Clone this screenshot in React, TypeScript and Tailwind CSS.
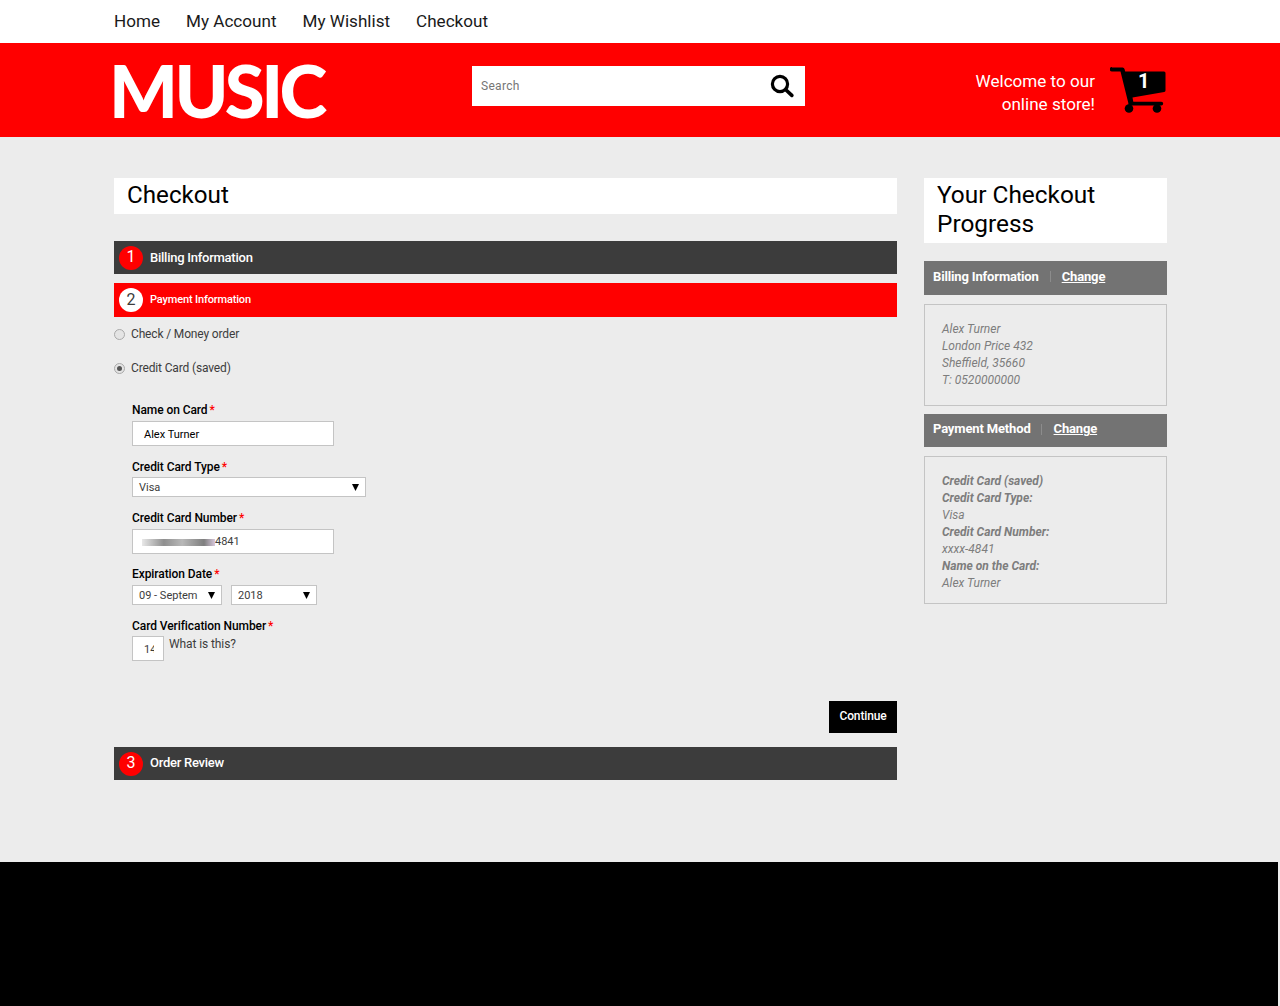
import { ReactNode } from 'react'

const navLinks = ['Home', 'My Account', 'My Wishlist', 'Checkout']

function CartIcon() {
  return (
    <svg width="58" height="48" viewBox="0 0 58 48" className="block">
      <path d="M2 1.5h10.5a2 2 0 0 1 2 1.6l.7 2.4H54a1.5 1.5 0 0 1 1.5 1.5v17.5a1.5 1.5 0 0 1-1.3 1.5L22.5 31.5l.8 4.2h28a1.9 1.9 0 0 1 0 3.8H18.6l-.4-3-7.7-31H2a2.2 2.2 0 0 1 0-4.5z" fill="#000" />
      <circle cx="19" cy="42.5" r="4.3" fill="#000" />
      <circle cx="47" cy="42.5" r="4.3" fill="#000" />
    </svg>
  )
}

function SearchIcon() {
  return (
    <svg width="24" height="24" viewBox="0 0 24 24" fill="none" stroke="#000" strokeWidth="3.2" strokeLinecap="round">
      <circle cx="10" cy="10" r="7.6" />
      <path d="M15.8 15.8l6 5.6" strokeWidth="3.6" />
    </svg>
  )
}

function StepBar({ num, label, active, lift }: { num: number; label: string; active?: boolean; lift?: boolean }) {
  return (
    <div className={active ? 'flex h-[34px] items-center bg-[#ff0000] pl-[5px]' : 'flex h-[33px] items-center bg-[#3c3c3c] pl-[5px]'}>
      <span
        className={
          active
            ? 'flex h-6 w-6 items-center justify-center rounded-full bg-white pb-px text-base text-[#3c3c3c]'
            : 'flex h-6 w-6 items-center justify-center rounded-full bg-[#ff0000] pb-[2px] text-base text-white'
        }
      >
        {num}
      </span>
      <span className={active ? 'ml-[7px] text-[11px] font-medium tracking-[-0.15px] text-white' : `ml-[7px] text-[13px] font-medium tracking-[-0.25px] text-white ${lift ? 'pb-[2px]' : ''}`}>{label}</span>
    </div>
  )
}

function Radio({ label, checked }: { label: string; checked?: boolean }) {
  return (
    <div className="flex h-[34px] items-center text-xs tracking-[-0.15px] text-[#3c3c3c]">
      <span className="flex h-[11px] w-[11px] items-center justify-center rounded-full border border-[#a9a9a9] bg-[#e4e4e4]">
        {checked && <span className="h-[5px] w-[5px] rounded-full bg-[#555555]" />}
      </span>
      <span className="ml-[6px]">{label}</span>
    </div>
  )
}

function FieldLabel({ children }: { children: ReactNode }) {
  return (
    <div className="text-xs leading-4 font-medium tracking-[-0.08px] text-black">
      {children}
      <span className="ml-[2px] text-[#ff0000]">*</span>
    </div>
  )
}

function FakeSelect({ value, width }: { value: string; width: string }) {
  return (
    <div className={`flex h-5 items-center justify-between border border-[#c4c4c4] bg-white pr-[6px] pl-[6px] text-[11px] text-[#3c3c3c] ${width}`}>
      <span className="pt-[2px]">{value}</span>
      <svg width="7" height="7" viewBox="0 0 7 7">
        <path d="M0 0h7L3.5 7z" fill="#000" />
      </svg>
    </div>
  )
}

function SideHeading({ title, gap, height }: { title: string; gap: string; height: string }) {
  return (
    <div className={`flex items-center bg-[#737373] pb-[3px] pl-[9px] text-[13px] font-bold tracking-[-0.15px] text-white ${height}`}>
      <span>{title}</span>
      <span className={`h-[11px] w-px bg-[#8c8c8c] ${gap}`} />
      <span className="underline">Change</span>
    </div>
  )
}

export default function App() {
  return (
    <div className="flex min-h-[1006px] flex-col bg-[#ececec] font-['Roboto',sans-serif]">
      <div className="h-[43px] bg-white">
        <nav className="ml-[114px] flex h-full items-center gap-[26px] text-[17.1px] text-[#1a1a1a]">
          {navLinks.map(link => (
            <span key={link}>{link}</span>
          ))}
        </nav>
      </div>

      <header className="flex h-[94px] items-center bg-[#ff0000] pl-[114px]">
        <div className="w-[358px] font-['Lato',sans-serif] text-[72.5px] leading-none font-black tracking-[-3.6px] whitespace-nowrap text-white">
          <span className="-ml-[5px] block">MUSIC</span>
        </div>
        <div className="mb-2 flex h-10 w-[333px] items-center justify-between bg-white pr-[11px] pl-[9px]">
          <span className="text-xs tracking-[0.3px] text-[#757575]">Search</span>
          <SearchIcon />
        </div>
        <div className="mt-[6px] ml-[160px] w-[130px] text-right text-[17.1px] leading-[23px] whitespace-nowrap text-white">
          Welcome to our
          <br />
          online store!
        </div>
        <div className="relative ml-[15px] h-12 w-[58px]">
          <CartIcon />
          <span className="absolute top-px left-[28px] text-xl font-bold text-white">1</span>
        </div>
      </header>

      <main className="ml-[114px] flex h-[725px] w-[1053px] gap-[27px] pt-[41px]">
        <section className="w-[783px]">
          <h1 className="flex h-9 items-center bg-white pb-[2px] pl-[13px] text-[24.2px] text-black">Checkout</h1>

          <div className="mt-[27px]">
            <StepBar num={1} label="Billing Information" />
          </div>
          <div className="mt-[9px]">
            <StepBar num={2} label="Payment Information" active />
          </div>

          <Radio label="Check / Money order" />
          <Radio label="Credit Card (saved)" checked />

          <div className="pt-[17px] pl-[18px]">
            <FieldLabel>Name on Card</FieldLabel>
            <div className="mt-[3px] flex h-[25px] w-[202px] items-center border border-[#c4c4c4] bg-white pt-[3px] pl-[11px] text-[11px] text-black">Alex Turner</div>

            <div className="mt-[13px]">
              <FieldLabel>Credit Card Type</FieldLabel>
            </div>
            <div className="mt-[2px]">
              <FakeSelect value="Visa" width="w-[234px]" />
            </div>

            <div className="mt-[13px]">
              <FieldLabel>Credit Card Number</FieldLabel>
            </div>
            <div className="mt-[3px] flex h-[25px] w-[202px] items-center border border-[#c4c4c4] bg-white pt-px pl-[9px] text-[11px] text-[#3c3c3c]">
              <span className="h-[7px] w-[73px] bg-[linear-gradient(90deg,#e8e8e8,#8f8f8f_30%,#b8b8b8_55%,#7f7f7f_85%,#d8c8dc)] blur-[0.6px]" />
              <span>4841</span>
            </div>

            <div className="mt-[12px]">
              <FieldLabel>Expiration Date</FieldLabel>
            </div>
            <div className="mt-[3px] flex gap-[9px]">
              <FakeSelect value="09 - Septem" width="w-[90px]" />
              <FakeSelect value="2018" width="w-[86px]" />
            </div>

            <div className="mt-[13px]">
              <FieldLabel>Card Verification Number</FieldLabel>
            </div>
            <div className="mt-[2px] flex items-start">
              <div className="flex h-[25px] w-8 items-center overflow-hidden border border-[#c4c4c4] bg-white pt-[4px] pl-[11px] text-[11px] text-[#3c3c3c]">
                <span className="w-[10px] overflow-hidden">14</span>
              </div>
              <span className="ml-[5px] text-xs leading-4 tracking-[-0.1px] text-[#3c3c3c]">What is this?</span>
            </div>
          </div>

          <div className="mt-[40px] flex justify-end">
            <div className="flex h-8 w-[68px] items-center justify-center bg-black pb-[2px] text-xs font-medium tracking-[-0.15px] text-white">Continue</div>
          </div>

          <div className="mt-[14px]">
            <StepBar num={3} label="Order Review" lift />
          </div>
        </section>

        <aside className="w-[243px]">
          <h2 className="bg-white px-[13px] pt-[2px] pb-[5px] text-[24.4px] leading-[29px] text-black">
            Your Checkout
            <br />
            Progress
          </h2>

          <div className="mt-[18px]">
            <SideHeading title="Billing Information" gap="mr-[11px] ml-[11px]" height="h-[34px]" />
          </div>
          <div className="mt-[9px] h-[102px] border border-[#c4c4c4] px-[17px] pt-[16px] text-xs leading-[17px] text-[#7d7d7d] italic">
            Alex Turner
            <br />
            London Price 432
            <br />
            Sheffield, 35660
            <br />
            T: 0520000000
          </div>

          <div className="mt-[8px]">
            <SideHeading title="Payment Method" gap="mr-[12px] ml-[10px]" height="h-[33px]" />
          </div>
          <div className="mt-[9px] h-[148px] border border-[#c4c4c4] px-[17px] pt-[16px] text-xs leading-[17px] text-[#7d7d7d] italic">
            <div className="font-bold">Credit Card (saved)</div>
            <div className="font-bold">Credit Card Type:</div>
            <div>Visa</div>
            <div className="font-bold">Credit Card Number:</div>
            <div>xxxx-4841</div>
            <div className="font-bold">Name on the Card:</div>
            <div>Alex Turner</div>
          </div>
        </aside>
      </main>

      <footer className="mr-[2px] h-[144px] bg-black" />
    </div>
  )
}
